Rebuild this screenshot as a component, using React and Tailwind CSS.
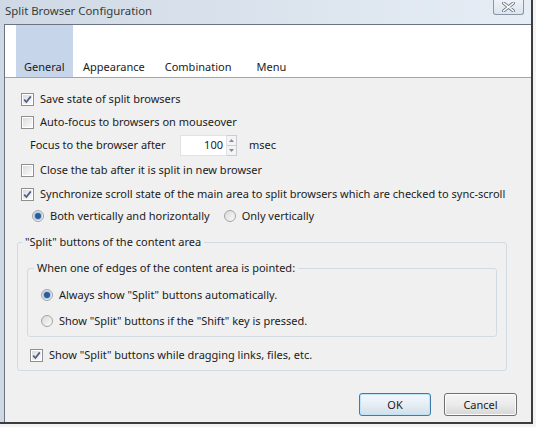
import React from "react";

const CheckBox = ({ checked }) => (
  <span className="w-[13px] h-[13px] shrink-0 border border-[#8f8f8f] bg-white p-[1px] flex">
    <span className="flex-1 bg-gradient-to-br from-[#dcdcdc] to-[#fafafa] flex items-center justify-center">
      {checked && (
        <svg width="9" height="9" viewBox="0 0 9 9">
          <path d="M1.2 4.6 L3.4 7 L7.8 1.4" fill="none" stroke="#4a5d85" strokeWidth="1.7" />
        </svg>
      )}
    </span>
  </span>
);

const Radio = ({ checked }) => (
  <span className="w-[12px] h-[12px] shrink-0 rounded-full border border-[#a3a3a3] bg-gradient-to-br from-[#d9d9d9] to-[#fbfbfb] flex items-center justify-center">
    {checked && (
      <span className="w-[6px] h-[6px] rounded-full bg-[#2a5c9a] ring-1 ring-[#9fc3e8]"></span>
    )}
  </span>
);

const CheckRow = ({ checked, children, className = "" }) => (
  <div className={`h-[22px] flex items-center gap-[6px] ${className}`}>
    <CheckBox checked={checked} />
    <span>{children}</span>
  </div>
);

const RadioRow = ({ checked, children, className = "" }) => (
  <div className={`h-[22px] flex items-center gap-[6px] ${className}`}>
    <Radio checked={checked} />
    <span>{children}</span>
  </div>
);

const tabs = [
  { label: "General", cls: "bg-[#c6d5ea] pl-[8px] w-[57px]" },
  { label: "Appearance", cls: "pl-[10px] pr-[9px]" },
  { label: "Combination", cls: "pl-[11px] pr-[14px]" },
  { label: "Menu", cls: "pl-[11px]" },
];

export default function App() {
  return (
    <div className="w-[536px] h-[427px] bg-[#f3f3f3] font-['Noto_Sans',sans-serif] text-[11px] text-[#1b1b1b] leading-[16px]">
      <div className="w-[533px] h-[424px] flex flex-col border-r-[2px] border-b-[2px] border-[#3c3c3c] bg-gradient-to-r from-[#cfd9e5] to-[#e6edf5]">
        {/* title bar */}
        <div className="h-[24px] shrink-0 flex items-start justify-between">
          <div className="pl-[5px] pt-[3px] text-[11.4px] text-[#3a3a3a]">Split Browser Configuration</div>
          <div className="w-[31px] h-[15px] mr-[7px] border border-t-0 border-[#8a96a6] rounded-b-[3px] bg-gradient-to-b from-[#eef2f7] to-[#dde4ec] flex items-center justify-center">
            <svg width="13" height="10" viewBox="0 0 13 10">
              <path d="M1.5 1 L11.5 9 M11.5 1 L1.5 9" stroke="#6e7783" strokeWidth="3.2" strokeLinecap="round" />
              <path d="M1.5 1 L11.5 9 M11.5 1 L1.5 9" stroke="#ffffff" strokeWidth="1.6" strokeLinecap="round" />
            </svg>
          </div>
        </div>

        {/* client */}
        <div className="flex-1 ml-[4px] border-t border-l border-[#6b7480] flex flex-col bg-[#f0f0f0]">
          {/* tab strip */}
          <div className="h-[53px] shrink-0 bg-white border-b border-[#a5a5a5] flex items-stretch pl-[11px]">
            {tabs.map((t) => (
              <div key={t.label} className={`flex items-end pb-[2px] ${t.cls}`}>
                {t.label}
              </div>
            ))}
          </div>

          <div className="flex-1 flex flex-col px-[12px] pt-[10px]">
            <CheckRow checked className="pl-[4px]">Save state of split browsers</CheckRow>
            <CheckRow className="pl-[4px] mt-[1px]">Auto-focus to browsers on mouseover</CheckRow>
            <div className="h-[22px] mt-[1px] flex items-center pl-[13px]">
              <span className="w-[150px]">Focus to the browser after</span>
              <div className="h-[21px] w-[47px] bg-white border border-[#dfe3e8] flex items-center justify-end pr-[3px]">100</div>
              <div className="h-[21px] w-[10px] flex flex-col border border-l-0 border-[#c9ced5]">
                <div className="flex-1 bg-[#f4f4f4] border-b border-[#c9ced5] flex items-center justify-center">
                  <svg width="5" height="3" viewBox="0 0 5 3"><path d="M0 3 L2.5 0 L5 3Z" fill="#8a8a8a" /></svg>
                </div>
                <div className="flex-1 bg-[#f4f4f4] flex items-center justify-center">
                  <svg width="5" height="3" viewBox="0 0 5 3"><path d="M0 0 L2.5 3 L5 0Z" fill="#8a8a8a" /></svg>
                </div>
              </div>
              <span className="ml-[12px]">msec</span>
            </div>
            <CheckRow className="pl-[4px] mt-[3px]">Close the tab after it is split in new browser</CheckRow>
            <CheckRow checked className="pl-[4px] mt-[2px]">
              Synchronize scroll state of the main area to split browsers which are checked to sync-scroll
            </CheckRow>
            <div className="h-[22px] flex items-center pl-[15px]">
              <RadioRow checked>Both vertically and horizontally</RadioRow>
              <RadioRow className="ml-[14px]">Only vertically</RadioRow>
            </div>

            <fieldset className="mt-[7px] w-[490px] border border-[#d3dbe2] rounded-[3px] pb-[4px]">
              <legend className="ml-[4px] px-[3px]">"Split" buttons of the content area</legend>
              <fieldset className="mt-[10px] ml-[9px] w-[470px] border border-[#d3dbe2] rounded-[3px] pb-[4px] pl-[13px]">
                <legend className="-ml-[7px] px-[3px]">When one of edges of the content area is pointed:</legend>
                <RadioRow checked className="mt-[8px]">Always show "Split" buttons automatically.</RadioRow>
                <RadioRow className="mt-[4px]">Show "Split" buttons if the "Shift" key is pressed.</RadioRow>
              </fieldset>
              <CheckRow checked className="pl-[12px] mt-[7px]">Show "Split" buttons while dragging links, files, etc.</CheckRow>
            </fieldset>

            <div className="mt-[22px] flex justify-end gap-[13px] pr-[2px]">
              <button className="w-[72px] h-[23px] rounded-[3px] border border-[#3d7bad] bg-gradient-to-b from-[#f2f7fb] via-[#e6eef5] to-[#d2dee9] shadow-[inset_0_0_0_1px_#bfe3f7]">
                OK
              </button>
              <button className="w-[73px] h-[23px] rounded-[3px] border border-[#707070] bg-gradient-to-b from-[#f4f4f4] via-[#ebebeb] to-[#d6d6d6] shadow-[inset_0_0_0_1px_#fcfcfc]">
                Cancel
              </button>
            </div>
          </div>
        </div>
      </div>
    </div>
  );
}
